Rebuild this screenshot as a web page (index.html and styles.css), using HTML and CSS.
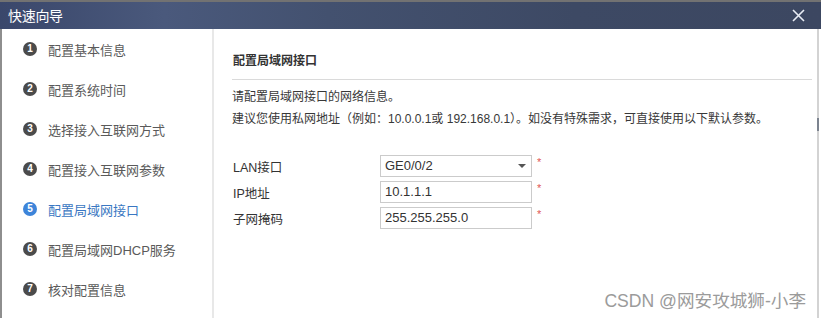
FILE: index.html
```html
<!DOCTYPE html>
<html lang="zh-CN">
<head>
<meta charset="utf-8">
<title>快速向导</title>
<link rel="stylesheet" href="styles.css">
</head>
<body>
<div class="window">
  <div class="titlebar">
    <span class="title">快速向导</span>
    <svg class="close" width="13" height="13" viewBox="0 0 13 13"><path d="M1 1 L12 12 M12 1 L1 12" stroke="#e8ecf4" stroke-width="1.6" fill="none"/></svg>
  </div>
  <div class="body">
    <ul class="steps">
      <li class="step"><span class="num">1</span><span>配置基本信息</span></li>
      <li class="step"><span class="num">2</span><span>配置系统时间</span></li>
      <li class="step"><span class="num">3</span><span>选择接入互联网方式</span></li>
      <li class="step"><span class="num">4</span><span>配置接入互联网参数</span></li>
      <li class="step active"><span class="num">5</span><span>配置局域网接口</span></li>
      <li class="step"><span class="num">6</span><span>配置局域网DHCP服务</span></li>
      <li class="step"><span class="num">7</span><span>核对配置信息</span></li>
    </ul>
    <div class="content">
      <h2 class="heading">配置局域网接口</h2>
      <p class="desc">请配置局域网接口的网络信息。</p>
      <p class="desc">建议您使用私网地址（例如：10.0.0.1或 192.168.0.1）。如没有特殊需求，可直接使用以下默认参数。</p>
      <div class="form">
        <div class="row">
          <label class="label">LAN接口</label>
          <div class="field select"><span>GE0/0/2</span><span class="caret"></span></div>
          <span class="req">*</span>
        </div>
        <div class="row">
          <label class="label">IP地址</label>
          <div class="field">10.1.1.1</div>
          <span class="req">*</span>
        </div>
        <div class="row">
          <label class="label">子网掩码</label>
          <div class="field">255.255.255.0</div>
          <span class="req">*</span>
        </div>
      </div>
    </div>
    <div class="thumb"></div>
  </div>
  <div class="watermark">CSDN @网安攻城狮-小李</div>
</div>
</body>
</html>
```
FILE: styles.css
```css
* { box-sizing: border-box; }
html, body { margin: 0; padding: 0; }
body {
  width: 821px;
  height: 318px;
  overflow: hidden;
  background: #fff;
  font-family: "Liberation Sans", "Noto Sans CJK SC", sans-serif;
  color: #333;
}
.window {
  position: relative;
  height: 318px;
  display: flex;
  flex-direction: column;
  background: #fff;
}
.titlebar {
  height: 29px;
  flex: none;
  border-top: 2px solid #727272;
  background: linear-gradient(90deg, #3a476b 0%, #4a597c 20%, #43516f 40%, #3d4964 70%, #3c4761 100%);
  display: flex;
  align-items: center;
  justify-content: space-between;
  padding: 0 16px 0 8px;
  color: #fff;
}
.title {
  font-size: 14px;
  line-height: 16px;
  letter-spacing: -0.3px;
}
.close { display: block; }
.body {
  position: relative;
  flex: 1;
  display: flex;
  border-left: 2px solid #8e8e8e;
  border-right: 2px solid #d3d3d3;
  margin-right: 2px;
}
.steps {
  list-style: none;
  margin: 0;
  padding: 0;
  width: 212px;
  flex: none;
  border-right: 2px solid #e8e8e8;
}
.step {
  height: 40px;
  display: flex;
  align-items: center;
  padding-left: 21px;
  gap: 11px;
  font-size: 13px;
  color: #5a5a5a;
}
.num {
  width: 14px;
  height: 14px;
  border-radius: 50%;
  background: #4b4b4b;
  color: #fff;
  font-size: 10px;
  font-weight: bold;
  display: flex;
  align-items: center;
  justify-content: center;
  line-height: 1;
}
.step.active { color: #3a77c2; }
.step.active .num { background: #3d84d9; }
.content {
  flex: 1;
  padding: 24px 5px 0 18px;
}
.heading {
  margin: 0;
  font-size: 12px;
  font-weight: bold;
  line-height: 16px;
  padding: 0 0 10px 1px;
  border-bottom: 1px solid #dadada;
  color: #333;
}
.desc {
  margin: 0;
  font-size: 12px;
  line-height: 22px;
  color: #383838;
}
.heading + .desc { margin-top: 6px; }
.form {
  margin-top: 25px;
  display: flex;
  flex-direction: column;
  gap: 4px;
}
.row {
  display: flex;
  align-items: center;
  height: 22px;
}
.label {
  width: 148px;
  padding-left: 1px;
  font-size: 12.5px;
  color: #333;
}
.field {
  width: 152px;
  height: 22px;
  border: 1px solid #cbcbcb;
  padding-left: 4px;
  font-size: 13px;
  line-height: 20px;
  color: #333;
}
.select {
  display: flex;
  align-items: center;
  justify-content: space-between;
  padding-right: 5px;
}
.caret {
  width: 0;
  height: 0;
  border-left: 4px solid transparent;
  border-right: 4px solid transparent;
  border-top: 4px solid #555;
}
.req {
  margin-left: 5px;
  font-size: 11px;
  color: #e05555;
  align-self: flex-start;
  line-height: 14px;
}
.thumb {
  position: absolute;
  right: -2px;
  top: 89px;
  width: 2px;
  height: 13px;
  background: #7c838f;
}
.watermark {
  position: absolute;
  right: 15px;
  bottom: 6px;
  font-size: 17.6px;
  line-height: 22px;
  color: #9b9b9b;
}
```
